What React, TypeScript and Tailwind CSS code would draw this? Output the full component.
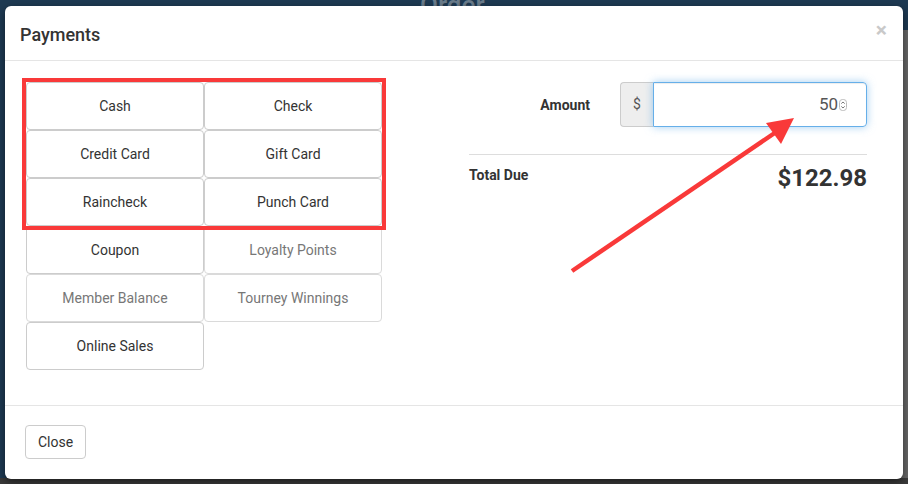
import React from "react";

const btns: { label: string; disabled?: boolean }[] = [
  { label: "Cash" },
  { label: "Check" },
  { label: "Credit Card" },
  { label: "Gift Card" },
  { label: "Raincheck" },
  { label: "Punch Card" },
  { label: "Coupon" },
  { label: "Loyalty Points", disabled: true },
  { label: "Member Balance", disabled: true },
  { label: "Tourney Winnings", disabled: true },
  { label: "Online Sales" },
];

export default function App() {
  return (
    <div
      className="relative w-[908px] h-[484px] overflow-hidden bg-[#1e3a53]"
      style={{ fontFamily: "Roboto, 'Open Sans', Arial, sans-serif" }}
    >
      {/* backdrop bits */}
      <div className="absolute left-[420px] top-[-14px] text-[26px] text-[#6b7d8c] font-medium">Order</div>
      <div className="absolute right-0 top-[30px] w-[10px] h-[454px] bg-[#666]" />
      <div className="absolute left-0 bottom-0 w-full h-[6px] bg-[#3a3a3a]" />

      {/* modal */}
      <div className="absolute left-[5px] top-[6px] w-[898px] h-[473px] bg-white rounded-[6px] shadow-[0_3px_9px_rgba(0,0,0,0.5)] flex flex-col text-[#333]">
        <div className="h-[55px] border-b border-[#e5e5e5] flex items-center justify-between pl-[15px] pr-[16px]">
          <div className="text-[18px] font-medium text-[#333] leading-none mt-[3px]">Payments</div>
          <div className="text-[21px] font-bold text-[#c9c9c9] leading-none -mt-[6px]">×</div>
        </div>

        <div className="h-[344px] flex pt-[21px] pl-[21px] pr-[36px]">
          <div className="relative w-[356px] h-[288px] grid grid-cols-2 grid-rows-6">
            {btns.map((b) => (
              <div
                key={b.label}
                className={
                  b.disabled
                    ? "h-[48px] flex items-center justify-center border border-[#dadada] rounded-[4px] text-[14px] text-[#777]"
                    : "h-[48px] flex items-center justify-center border border-[#ccc] rounded-[4px] text-[14px] text-[#333]"
                }
              >
                {b.label}
              </div>
            ))}
            <div className="absolute left-[-4px] top-[-4px] w-[364px] h-[152px] border-[4px] border-[#f93939]" />
          </div>

          <div className="ml-[87px] w-[398px] flex flex-col">
            <div className="flex items-center justify-end h-[45px]">
              <div className="text-[14px] font-bold text-[#333] mr-[30px] mt-[1px]">Amount</div>
              <div className="flex h-[45px] w-[247px]">
                <div className="w-[33px] flex items-center justify-center bg-[#eee] border border-[#ccc] border-r-0 rounded-l-[4px] text-[14px] text-[#555]">
                  $
                </div>
                <div className="flex-1 flex items-center justify-end border border-[#66afe9] rounded-r-[4px] shadow-[inset_0_1px_1px_rgba(0,0,0,0.075),0_0_8px_rgba(102,175,233,0.6)] pr-[19px]">
                  <span className="text-[17px] text-[#555]">50</span>
                  <svg width="8" height="12" viewBox="0 0 8 12" className="ml-[1px]">
                    <rect x="0.5" y="0.5" width="7" height="11" rx="3" fill="#fff" stroke="#bbb" />
                    <path d="M2.3 4.6 L4 3 L5.7 4.6" fill="none" stroke="#666" strokeWidth="0.9" />
                    <path d="M2.3 7.4 L4 9 L5.7 7.4" fill="none" stroke="#666" strokeWidth="0.9" />
                  </svg>
                </div>
              </div>
            </div>
            <div className="mt-[27px] border-t border-[#ddd]" />
            <div className="flex justify-between items-start pt-[9px]">
              <div className="text-[14px] font-bold text-[#333] pt-[1px]">Total Due</div>
              <div className="text-[24px] font-bold text-[#333] leading-[28px]">$122.98</div>
            </div>
          </div>
        </div>

        <div className="flex-1 border-t border-[#e5e5e5] pt-[19px] pl-[20px]">
          <div className="w-[61px] h-[34px] flex items-center justify-center border border-[#ccc] rounded-[4px] text-[14px] text-[#333]">
            Close
          </div>
        </div>
      </div>

      {/* annotation arrow */}
      <svg className="absolute left-0 top-0 pointer-events-none" width="908" height="484">
        <line x1="572" y1="271" x2="782" y2="128" stroke="#f93939" strokeWidth="4.5" />
        <polygon points="794,118 766,123 781,144" fill="#f93939" />
      </svg>
    </div>
  );
}
